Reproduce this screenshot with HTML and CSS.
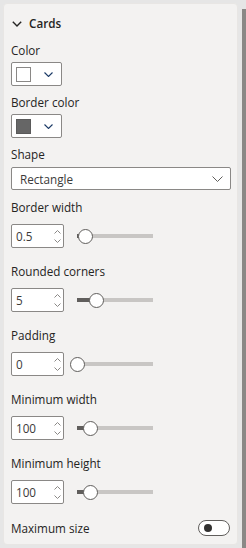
FILE: index.html
```html
<!DOCTYPE html>
<html lang="en">
<head>
  <meta charset="UTF-8" />
  <meta name="viewport" content="width=device-width, initial-scale=1.0"/>
  <title>Format - Cards</title>
  <link rel="stylesheet" href="styles.css">
</head>
<body>
<div class="page">
  <div class="panel">

    <div class="header">
      <svg class="chev-head" width="10" height="6" viewBox="0 0 10 6"><polyline points="0.8,0.8 5,5 9.2,0.8" fill="none" stroke="#252423" stroke-width="1.4"/></svg>
      <span>Cards</span>
    </div>

    <div class="field f-first">
      <div class="label">Color</div>
      <div class="picker">
        <span class="swatch"></span>
        <svg width="9" height="5" viewBox="0 0 9 5"><polyline points="0.5,0.5 4.5,4.5 8.5,0.5" fill="none" stroke="#1b3a66" stroke-width="1.1"/></svg>
      </div>
    </div>

    <div class="field f-color">
      <div class="label">Border color</div>
      <div class="picker">
        <span class="swatch dark"></span>
        <svg width="9" height="5" viewBox="0 0 9 5"><polyline points="0.5,0.5 4.5,4.5 8.5,0.5" fill="none" stroke="#1b3a66" stroke-width="1.1"/></svg>
      </div>
    </div>

    <div class="field f-shape">
      <div class="label">Shape</div>
      <div class="dropdown">
        <span>Rectangle</span>
        <svg width="11" height="6" viewBox="0 0 11 6"><polyline points="0.5,0.5 5.5,5.5 10.5,0.5" fill="none" stroke="#605e5c" stroke-width="1"/></svg>
      </div>
    </div>

    <div class="field f-num f-after-shape">
      <div class="label">Border width</div>
      <div class="row">
        <div class="spin">
          <span>0.5</span>
          <div class="arrows">
            <svg width="7" height="4" viewBox="0 0 7 4"><polyline points="0.5,3.5 3.5,0.5 6.5,3.5" fill="none" stroke="#8a8886" stroke-width="1"/></svg>
            <svg width="7" height="4" viewBox="0 0 7 4"><polyline points="0.5,0.5 3.5,3.5 6.5,0.5" fill="none" stroke="#8a8886" stroke-width="1"/></svg>
          </div>
        </div>
        <div class="slider"><span class="fill" style="width: 8px"></span><span class="thumb"></span><span class="rest"></span></div>
      </div>
    </div>

    <div class="field f-num">
      <div class="label">Rounded corners</div>
      <div class="row">
        <div class="spin">
          <span>5</span>
          <div class="arrows">
            <svg width="7" height="4" viewBox="0 0 7 4"><polyline points="0.5,3.5 3.5,0.5 6.5,3.5" fill="none" stroke="#8a8886" stroke-width="1"/></svg>
            <svg width="7" height="4" viewBox="0 0 7 4"><polyline points="0.5,0.5 3.5,3.5 6.5,0.5" fill="none" stroke="#8a8886" stroke-width="1"/></svg>
          </div>
        </div>
        <div class="slider"><span class="fill" style="width: 19px"></span><span class="thumb"></span><span class="rest"></span></div>
      </div>
    </div>

    <div class="field f-num">
      <div class="label">Padding</div>
      <div class="row">
        <div class="spin">
          <span>0</span>
          <div class="arrows">
            <svg width="7" height="4" viewBox="0 0 7 4"><polyline points="0.5,3.5 3.5,0.5 6.5,3.5" fill="none" stroke="#8a8886" stroke-width="1"/></svg>
            <svg width="7" height="4" viewBox="0 0 7 4"><polyline points="0.5,0.5 3.5,3.5 6.5,0.5" fill="none" stroke="#8a8886" stroke-width="1"/></svg>
          </div>
        </div>
        <div class="slider"><span class="fill" style="width: 0px"></span><span class="thumb"></span><span class="rest"></span></div>
      </div>
    </div>

    <div class="field f-num">
      <div class="label">Minimum width</div>
      <div class="row">
        <div class="spin">
          <span>100</span>
          <div class="arrows">
            <svg width="7" height="4" viewBox="0 0 7 4"><polyline points="0.5,3.5 3.5,0.5 6.5,3.5" fill="none" stroke="#8a8886" stroke-width="1"/></svg>
            <svg width="7" height="4" viewBox="0 0 7 4"><polyline points="0.5,0.5 3.5,3.5 6.5,0.5" fill="none" stroke="#8a8886" stroke-width="1"/></svg>
          </div>
        </div>
        <div class="slider"><span class="fill" style="width: 13px"></span><span class="thumb"></span><span class="rest"></span></div>
      </div>
    </div>

    <div class="field f-num">
      <div class="label">Minimum height</div>
      <div class="row">
        <div class="spin">
          <span>100</span>
          <div class="arrows">
            <svg width="7" height="4" viewBox="0 0 7 4"><polyline points="0.5,3.5 3.5,0.5 6.5,3.5" fill="none" stroke="#8a8886" stroke-width="1"/></svg>
            <svg width="7" height="4" viewBox="0 0 7 4"><polyline points="0.5,0.5 3.5,3.5 6.5,0.5" fill="none" stroke="#8a8886" stroke-width="1"/></svg>
          </div>
        </div>
        <div class="slider"><span class="fill" style="width: 13px"></span><span class="thumb"></span><span class="rest"></span></div>
      </div>
    </div>

    <div class="toggle-row">
      <div class="label">Maximum size</div>
      <div class="toggle"><span class="dot"></span></div>
    </div>

  </div>
  <div class="scrollbar"></div>
</div>
</body>
</html>
```

FILE: styles.css
```css
body {
  margin: 0;
  background: #e6e6e6;
  font-family: "Open Sans", "Noto Sans", Arial, sans-serif;
  font-size: 11.7px;
  color: #252423;
}
.page {
  display: flex;
  height: 548px;
}
.panel {
  box-sizing: border-box;
  width: 235px;
  height: 542px;
  margin: 3px 0 0 3px;
  padding: 11px 7px 0 7px;
  background: #f3f2f1;
  border: 1px solid #e8e6e4;
  border-radius: 4px;
}
.scrollbar {
  width: 4px;
  margin: 9px 0 0 4px;
  background: #8a8886;
}
.header {
  display: flex;
  align-items: center;
  height: 16px;
  font-weight: 600;
  font-size: 11.7px;
}
.chev-head {
  margin: 1px 7px 0 1px;
}
.label {
  line-height: 16px;
  height: 16px;
}
.field .label {
  margin-bottom: 4px;
}
.f-first { margin-top: 11px; }
.f-color { margin-top: 8px; }
.f-shape { margin-top: 8px; }
.f-shape .label { margin-bottom: 5px; }
.f-num { margin-top: 15px; }
.f-num .label { margin-bottom: 9px; }
.f-after-shape { margin-top: 9px; }

.picker {
  box-sizing: border-box;
  width: 51px;
  height: 24px;
  display: flex;
  align-items: center;
  justify-content: space-between;
  padding: 0 8px 0 4px;
  background: #fff;
  border: 1px solid #8a8886;
  border-radius: 2px;
}
.swatch {
  box-sizing: border-box;
  width: 15px;
  height: 15px;
  background: #fff;
  border: 1px solid #8a8886;
}
.swatch.dark {
  background: #666666;
  border-color: #5a5a5a;
}
.dropdown {
  box-sizing: border-box;
  width: 220px;
  height: 23px;
  display: flex;
  align-items: center;
  justify-content: space-between;
  padding: 0 7px 0 8px;
  background: #fff;
  border: 1px solid #8a8886;
  border-radius: 2px;
  color: #3b3a39;
}
.row {
  display: flex;
  align-items: center;
}
.spin {
  box-sizing: border-box;
  width: 53px;
  height: 24px;
  display: flex;
  align-items: center;
  justify-content: space-between;
  padding: 0 2px 0 4px;
  background: #fff;
  border: 1px solid #8a8886;
  border-radius: 2px;
  color: #3b3a39;
}
.arrows {
  display: flex;
  flex-direction: column;
  gap: 5px;
}
.arrows svg {
  display: block;
}
.slider {
  display: flex;
  align-items: center;
  width: 76px;
  margin-left: 13px;
}
.fill {
  height: 4px;
  background: #605e5c;
}
.rest {
  flex: 1;
  height: 4px;
  background: #c8c6c4;
}
.thumb {
  box-sizing: border-box;
  flex: none;
  width: 15px;
  height: 15px;
  margin: 0 -7px;
  border: 1.5px solid #605e5c;
  border-radius: 50%;
  background: #fff;
  position: relative;
  z-index: 1;
}
.toggle-row {
  display: flex;
  align-items: center;
  justify-content: space-between;
  margin-top: 16px;
}
.toggle {
  box-sizing: border-box;
  width: 32px;
  height: 16px;
  display: flex;
  align-items: center;
  padding-left: 5px;
  background: #fff;
  border: 1px solid #605e5c;
  border-radius: 8px;
}
.dot {
  width: 8px;
  height: 8px;
  border-radius: 50%;
  background: #323130;
}
```
